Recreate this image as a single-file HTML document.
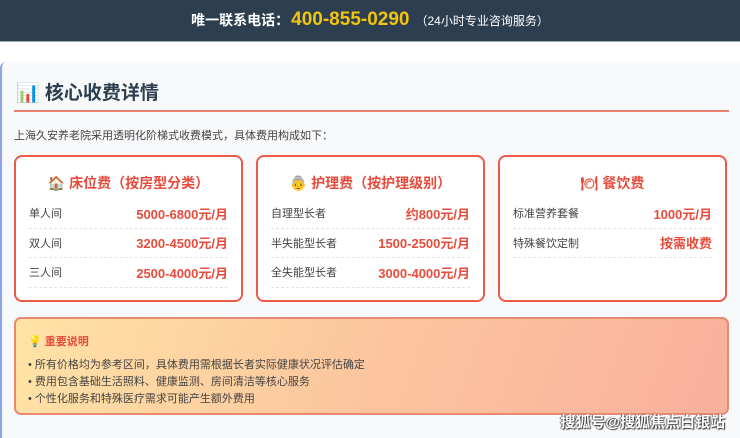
<!DOCTYPE html>
<html><head><meta charset="utf-8"><style>
*{margin:0;padding:0;box-sizing:border-box}
body{width:740px;height:438px;overflow:hidden;background:#fff;font-family:"Liberation Sans","Noto Sans CJK SC",sans-serif;position:relative}
.hdr{height:42px;background:#2c3e50;color:#fff;text-align:center;font-size:14px;font-weight:bold;line-height:40px;border-bottom:1px solid #9aa}
.hdr .ph{color:#f1c40f;font-size:19px;margin:0 6px 0 2px}
.hdr .s{font-weight:normal;font-size:12px}
.main{position:absolute;left:0;top:62px;width:740px;height:376px;background:#f8f9fb;border-left:2px solid #8fa3e8;border-radius:6px 0 0 0}
.title{position:absolute;left:14px;top:16px;font-size:19px;font-weight:bold;color:#2c3e50}
.line{position:absolute;left:12px;top:48px;width:715px;height:2px;background:#e8806f}
.intro{position:absolute;left:12px;top:65px;font-size:11px;color:#444}
.card{position:absolute;top:93px;width:229px;height:147px;background:#fff;border:2px solid #ec5a48;border-radius:8px;padding:0 13px}
.card h3{text-align:center;color:#e74c3c;font-size:14px;margin-top:16px;height:26px}
.row{display:flex;justify-content:space-between;align-items:center;height:29.5px;border-bottom:1px dashed #e4e4e4;font-size:11px;color:#444}
.row b{color:#e74c3c;font-size:13px}
.note{position:absolute;left:12px;top:255px;width:715px;height:98px;border:2px solid #e88a72;border-radius:7px;background:linear-gradient(110deg,#ffe3a6,#fcc59e 50%,#f9b09c);padding:14px 12px}
.note h4{color:#e74c3c;font-size:11px;margin-bottom:8px}
.note p{font-size:11px;color:#444;line-height:17px}
.wm{position:absolute;right:15px;bottom:6px;color:#fff;font-size:15px;font-weight:bold;text-shadow:1px 1px 1px #333,-1px 0 1px #555}
</style></head><body>
<div class="hdr">唯一联系电话：<span class="ph">400-855-0290</span><span class="s">（24小时专业咨询服务）</span></div>
<div class="main">
<div class="title">📊 核心收费详情</div>
<div class="line"></div>
<div class="intro">上海久安养老院采用透明化阶梯式收费模式，具体费用构成如下：</div>
<div class="card" style="left:12px"><h3>🏠 床位费（按房型分类）</h3>
<div class="row"><span>单人间</span><b>5000-6800元/月</b></div>
<div class="row"><span>双人间</span><b>3200-4500元/月</b></div>
<div class="row"><span>三人间</span><b>2500-4000元/月</b></div></div>
<div class="card" style="left:254px"><h3>👵 护理费（按护理级别）</h3>
<div class="row"><span>自理型长者</span><b>约800元/月</b></div>
<div class="row"><span>半失能型长者</span><b>1500-2500元/月</b></div>
<div class="row"><span>全失能型长者</span><b>3000-4000元/月</b></div></div>
<div class="card" style="left:496px"><h3>🍽 餐饮费</h3>
<div class="row"><span>标准营养套餐</span><b>1000元/月</b></div>
<div class="row"><span>特殊餐饮定制</span><b>按需收费</b></div></div>
<div class="note"><h4>💡 重要说明</h4>
<p>• 所有价格均为参考区间，具体费用需根据长者实际健康状况评估确定</p>
<p>• 费用包含基础生活照料、健康监测、房间清洁等核心服务</p>
<p>• 个性化服务和特殊医疗需求可能产生额外费用</p></div>
</div>
<div class="wm">搜狐号@搜狐焦点白银站</div>
</body></html>
